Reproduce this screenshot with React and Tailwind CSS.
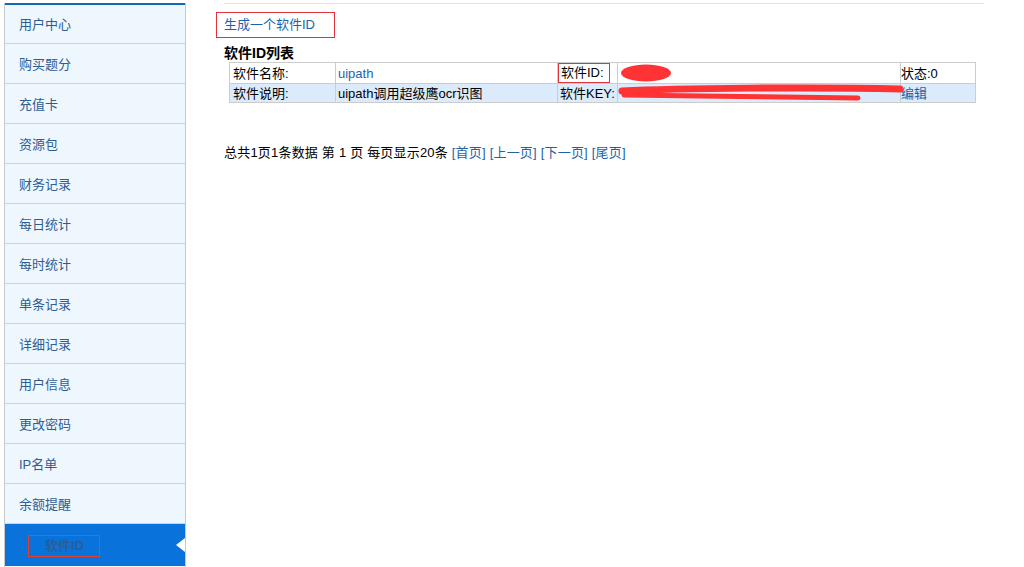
const menu = [
  "用户中心",
  "购买题分",
  "充值卡",
  "资源包",
  "财务记录",
  "每日统计",
  "每时统计",
  "单条记录",
  "详细记录",
  "用户信息",
  "更改密码",
  "IP名单",
  "余额提醒",
]

const font = { fontFamily: '"Liberation Sans", "Noto Sans CJK SC", sans-serif' }

function Scribble({ wide }) {
  if (wide) {
    return (
      <svg width="290" height="20" viewBox="0 0 290 20" className="absolute left-0 top-0">
        <path d="M4 7 C60 4 200 3 282 5" stroke="#f33" strokeWidth="7" strokeLinecap="round" fill="none" />
        <path d="M6 11 C80 12 180 13 240 14" stroke="#f33" strokeWidth="5" strokeLinecap="round" fill="none" />
      </svg>
    )
  }
  return (
    <svg width="60" height="20" viewBox="0 0 60 20" className="absolute left-0 top-0">
      <ellipse cx="28" cy="10" rx="25" ry="8.5" fill="#f33" />
    </svg>
  )
}

export default function App() {
  return (
    <div className="w-[1024px] h-[567px] bg-white flex text-[13px] overflow-hidden" style={font}>
      <div className="ml-[4px] mt-[3px] w-[182px] h-[570px] border-l border-r border-[#c9c9c9] bg-[#eef6fe] flex flex-col">
        <div className="h-[2px] bg-[#1567ad]" />
        {menu.map((m, i) => (
          <div
            key={m}
            className={
              i === 0
                ? "h-[39px] shrink-0 border-b border-[#c8d4e0] flex items-center pl-[14px] pt-[2px] text-[#2e5d92]"
                : "h-[40px] shrink-0 border-b border-[#c8d4e0] flex items-center pl-[14px] pt-[2px] text-[#2e5d92]"
            }
          >
            {m}
          </div>
        ))}
        <div className="relative h-[42px] shrink-0 bg-[#0a73db] flex items-center pl-[23px] pt-[1px]">
          <span className="border border-[#e0402d] w-[72px] h-[22px] flex items-center pl-[16px] text-[#2a5d99] font-bold">软件ID</span>
          <div className="absolute right-0 top-[14px] w-0 h-0 border-y-[7px] border-y-transparent border-r-[9px] border-r-white" />
        </div>
      </div>

      <div className="flex-1 pl-[38px] pt-[3px]">
        <div className="w-[760px] h-px bg-[#e3e3e3] mb-[8px]" />
        <div className="-ml-[8px] w-[119px] h-[26px] border border-[#e0333b] flex items-center pl-[7px] text-[#1d62a8]">
          生成一个软件ID
        </div>
        <div className="mt-[6px] font-bold text-[14px] text-black leading-[18px]">软件ID列表</div>
        <table className="ml-[5px] border-collapse text-black leading-[17px]">
          <tbody>
            <tr className="h-[20px]">
              <td className="w-[106px] border border-[#cccccc] pl-[3px]">软件名称:</td>
              <td className="w-[222px] border border-[#cccccc] pl-[2px] text-[#1d62a8]">uipath</td>
              <td className="w-[60px] border border-[#cccccc] p-0">
                <span className="inline-block border border-[#e0333b] h-[20px] w-[52px] leading-[18px] pl-[2px]">软件ID:</span>
              </td>
              <td className="w-[283px] border border-[#cccccc] relative p-0">
                <Scribble />
              </td>
              <td className="w-[75px] border border-[#cccccc]">状态:0</td>
            </tr>
            <tr className="h-[19px] bg-[#dcebfb]">
              <td className="border border-[#cccccc] pl-[3px]">软件说明:</td>
              <td className="border border-[#cccccc] pl-[2px]">uipath调用超级鹰ocr识图</td>
              <td className="border border-[#cccccc] pl-[2px]">软件KEY:</td>
              <td className="border border-[#cccccc] relative p-0">
                <Scribble wide />
              </td>
              <td className="border border-[#cccccc] text-[#1d62a8]">编辑</td>
            </tr>
          </tbody>
        </table>
        <div className="mt-[40px] text-black tracking-[0.2px]">
          总共1页1条数据 第 1 页 每页显示20条{" "}
          <span className="text-[#1d62a8]">[首页]</span>{" "}
          <span className="text-[#1d62a8]">[上一页]</span>{" "}
          <span className="text-[#1d62a8]">[下一页]</span>{" "}
          <span className="text-[#1d62a8]">[尾页]</span>
        </div>
      </div>
    </div>
  )
}
